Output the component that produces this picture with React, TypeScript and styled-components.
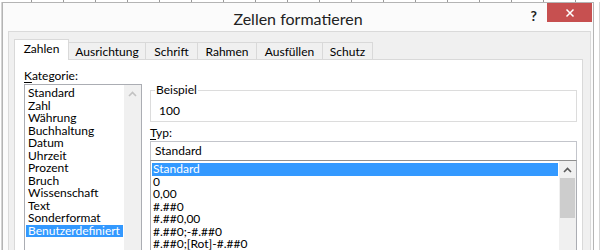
import React from "react";
import styled, { createGlobalStyle } from "styled-components";

const GlobalStyle = createGlobalStyle`
  html, body {
    margin: 0;
    padding: 0;
    background: #ffffff;
  }
  body {
    font-family: Lato, "Noto Sans", "DejaVu Sans", sans-serif;
    font-size: 12px;
    color: #000000;
  }
`;

const Screen = styled.div`
  width: 600px;
  height: 250px;
  overflow: hidden;
  display: flex;
  flex-direction: column;
  background: #ffffff;
`;

const SheetEdge = styled.div`
  height: 2px;
  flex: none;
  background: repeating-linear-gradient(
    90deg,
    #ffffff 0,
    #ffffff 31px,
    #9a9a9a 31px,
    #9a9a9a 32px
  );
`;

const Row = styled.div`
  display: flex;
  flex: 1;
  min-height: 0;
`;

const SideStrip = styled.div<{ $w: number }>`
  width: ${(p) => p.$w}px;
  flex: none;
  background: #ffffff;
  border-right: 1px solid #d4d4d4;
`;

const Dialog = styled.div`
  width: 590px;
  flex: none;
  display: flex;
  flex-direction: column;
  background: #fbfbfb;
  border: 1px solid #b4b4b4;
  border-bottom: none;
`;

const TitleBar = styled.div`
  height: 28px;
  flex: none;
  display: grid;
  grid-template-columns: 1fr auto 1fr;
  align-items: start;
`;

const Title = styled.div`
  grid-column: 2;
  font-size: 16px;
  line-height: 20px;
  padding-top: 6px;
  color: #222222;
`;

const Controls = styled.div`
  grid-column: 3;
  justify-self: end;
  display: flex;
  align-items: flex-start;
`;

const Help = styled.div`
  font-size: 14px;
  font-weight: 700;
  line-height: 16px;
  padding-top: 5px;
  margin-right: 10px;
  color: #222;
`;

const CloseButton = styled.div`
  width: 45px;
  height: 19px;
  margin-right: 1px;
  background: #c75050;
  display: flex;
  align-items: center;
  justify-content: center;
`;

const Frame = styled.div`
  flex: 1;
  margin: 0 2px 0 5px;
  padding: 7px 7px 0 5px;
  background: #f0f0f0;
  border: 1px solid #dadada;
  border-bottom: none;
  display: flex;
  flex-direction: column;
`;

const TabStrip = styled.div`
  display: flex;
  align-items: flex-end;
  height: 21px;
  position: relative;
  z-index: 1;
  margin-bottom: -1px;
`;

const Tab = styled.div<{ $w: number; $active?: boolean }>`
  width: ${(p) => p.$w}px;
  box-sizing: border-box;
  height: ${(p) => (p.$active ? 21 : 18)}px;
  padding-top: 2px;
  line-height: 14px;
  text-align: center;
  background: ${(p) => (p.$active ? "#ffffff" : "#f0f0f0")};
  border: 1px solid #d9d9d9;
  border-bottom: ${(p) => (p.$active ? "none" : "1px solid #d9d9d9")};
  margin-left: -1px;
  &:first-child {
    margin-left: 0;
  }
`;

const Panel = styled.div`
  flex: 1;
  background: #ffffff;
  border: 1px solid #d9d9d9;
  border-bottom: none;
  padding: 9px 5px 0 9px;
  display: grid;
  grid-template-columns: 118px 427px;
  column-gap: 8px;
  align-items: start;
`;

const Column = styled.div`
  display: flex;
  flex-direction: column;
`;

const Label = styled.div`
  line-height: 14px;
  margin-bottom: 1px;
  u {
    text-decoration-thickness: 1px;
    text-underline-offset: 2px;
  }
`;

const ListBox = styled.div<{ $h: number; $dark?: boolean }>`
  height: ${(p) => p.$h}px;
  border: 1px solid #abadb3;
  border-top-color: ${(p) => (p.$dark ? "#8f8f8f" : "#abadb3")};
  display: flex;
  background: #ffffff;
`;

const Rows = styled.div`
  flex: 1;
  padding: 2px 1px 0 1px;
  display: flex;
  flex-direction: column;
`;

const Item = styled.div<{ $selected?: boolean; $indent: number }>`
  line-height: 12.5px;
  height: 12.5px;
  padding-left: ${(p) => p.$indent}px;
  white-space: nowrap;
  background: ${(p) => (p.$selected ? "#3399ff" : "transparent")};
  color: ${(p) => (p.$selected ? "#ffffff" : "#000000")};
`;

const ScrollBar = styled.div`
  width: 17px;
  flex: none;
  background: #f0f0f0;
  display: flex;
  flex-direction: column;
`;

const ScrollArrow = styled.div`
  height: 17px;
  display: flex;
  align-items: center;
  justify-content: center;
`;

const Thumb = styled.div<{ $h: number }>`
  height: ${(p) => p.$h}px;
  margin: 0 1px;
  background: #cdcdcd;
`;

const GroupBox = styled.fieldset`
  margin: 14px 0 0 0;
  padding: 0 0 3px 4px;
  border: 1px solid #dcdcdc;
  min-width: 0;
  legend {
    padding: 0 1px;
    line-height: 14px;
  }
`;

const Sample = styled.div`
  line-height: 14px;
  margin-top: 7px;
  padding-left: 4px;
`;

const TypeLabel = styled(Label)`
  margin-top: 4px;
`;

const TextField = styled.div`
  height: 18px;
  border: 1px solid #c3c5cb;
  border-bottom: none;
  padding-left: 4px;
  line-height: 18px;
  background: #ffffff;
`;

const Chevron = ({ color }: { color: string }) => (
  <svg width="9" height="6" viewBox="0 0 9 6">
    <polyline
      points="1,5 4.5,1.5 8,5"
      fill="none"
      stroke={color}
      strokeWidth="1.6"
    />
  </svg>
);

const categories = [
  "Standard",
  "Zahl",
  "Währung",
  "Buchhaltung",
  "Datum",
  "Uhrzeit",
  "Prozent",
  "Bruch",
  "Wissenschaft",
  "Text",
  "Sonderformat",
  "Benutzerdefiniert",
];

const formats = [
  "Standard",
  "0",
  "0,00",
  "#.##0",
  "#.##0,00",
  "#.##0;-#.##0",
  "#.##0;[Rot]-#.##0",
];

const tabs = [
  { name: "Zahlen", w: 55 },
  { name: "Ausrichtung", w: 78 },
  { name: "Schrift", w: 53 },
  { name: "Rahmen", w: 60 },
  { name: "Ausfüllen", w: 67 },
  { name: "Schutz", w: 51 },
];

export default function App() {
  return (
    <>
      <GlobalStyle />
      <Screen>
        <SheetEdge />
        <Row>
          <SideStrip $w={1} />
          <Dialog>
            <TitleBar>
              <Title>Zellen formatieren</Title>
              <Controls>
                <Help>?</Help>
                <CloseButton>
                  <svg width="10" height="10" viewBox="0 0 10 10">
                    <path
                      d="M1.5 1.5 L8.5 8.5 M8.5 1.5 L1.5 8.5"
                      stroke="#ffffff"
                      strokeWidth="1.5"
                    />
                  </svg>
                </CloseButton>
              </Controls>
            </TitleBar>
            <Frame>
              <TabStrip>
                {tabs.map((t, i) => (
                  <Tab key={t.name} $w={t.w} $active={i === 0}>
                    {t.name}
                  </Tab>
                ))}
              </TabStrip>
              <Panel>
                <Column>
                  <Label>
                    <u>K</u>ategorie:
                  </Label>
                  <ListBox $h={180}>
                    <Rows>
                      {categories.map((c) => (
                        <Item
                          key={c}
                          $indent={2}
                          $selected={c === "Benutzerdefiniert"}
                        >
                          {c}
                        </Item>
                      ))}
                    </Rows>
                    <ScrollBar>
                      <ScrollArrow>
                        <Chevron color="#c2c2c2" />
                      </ScrollArrow>
                    </ScrollBar>
                  </ListBox>
                </Column>
                <Column>
                  <GroupBox>
                    <legend>Beispiel</legend>
                    <Sample>100</Sample>
                  </GroupBox>
                  <TypeLabel>
                    <u>T</u>yp:
                  </TypeLabel>
                  <TextField>Standard</TextField>
                  <ListBox $h={120} $dark>
                    <Rows>
                      {formats.map((f, i) => (
                        <Item key={f} $indent={1} $selected={i === 0}>
                          {f}
                        </Item>
                      ))}
                    </Rows>
                    <ScrollBar>
                      <ScrollArrow>
                        <Chevron color="#5a5a5a" />
                      </ScrollArrow>
                      <Thumb $h={40} />
                    </ScrollBar>
                  </ListBox>
                </Column>
              </Panel>
            </Frame>
          </Dialog>
          <SideStrip $w={5} />
        </Row>
      </Screen>
    </>
  );
}
